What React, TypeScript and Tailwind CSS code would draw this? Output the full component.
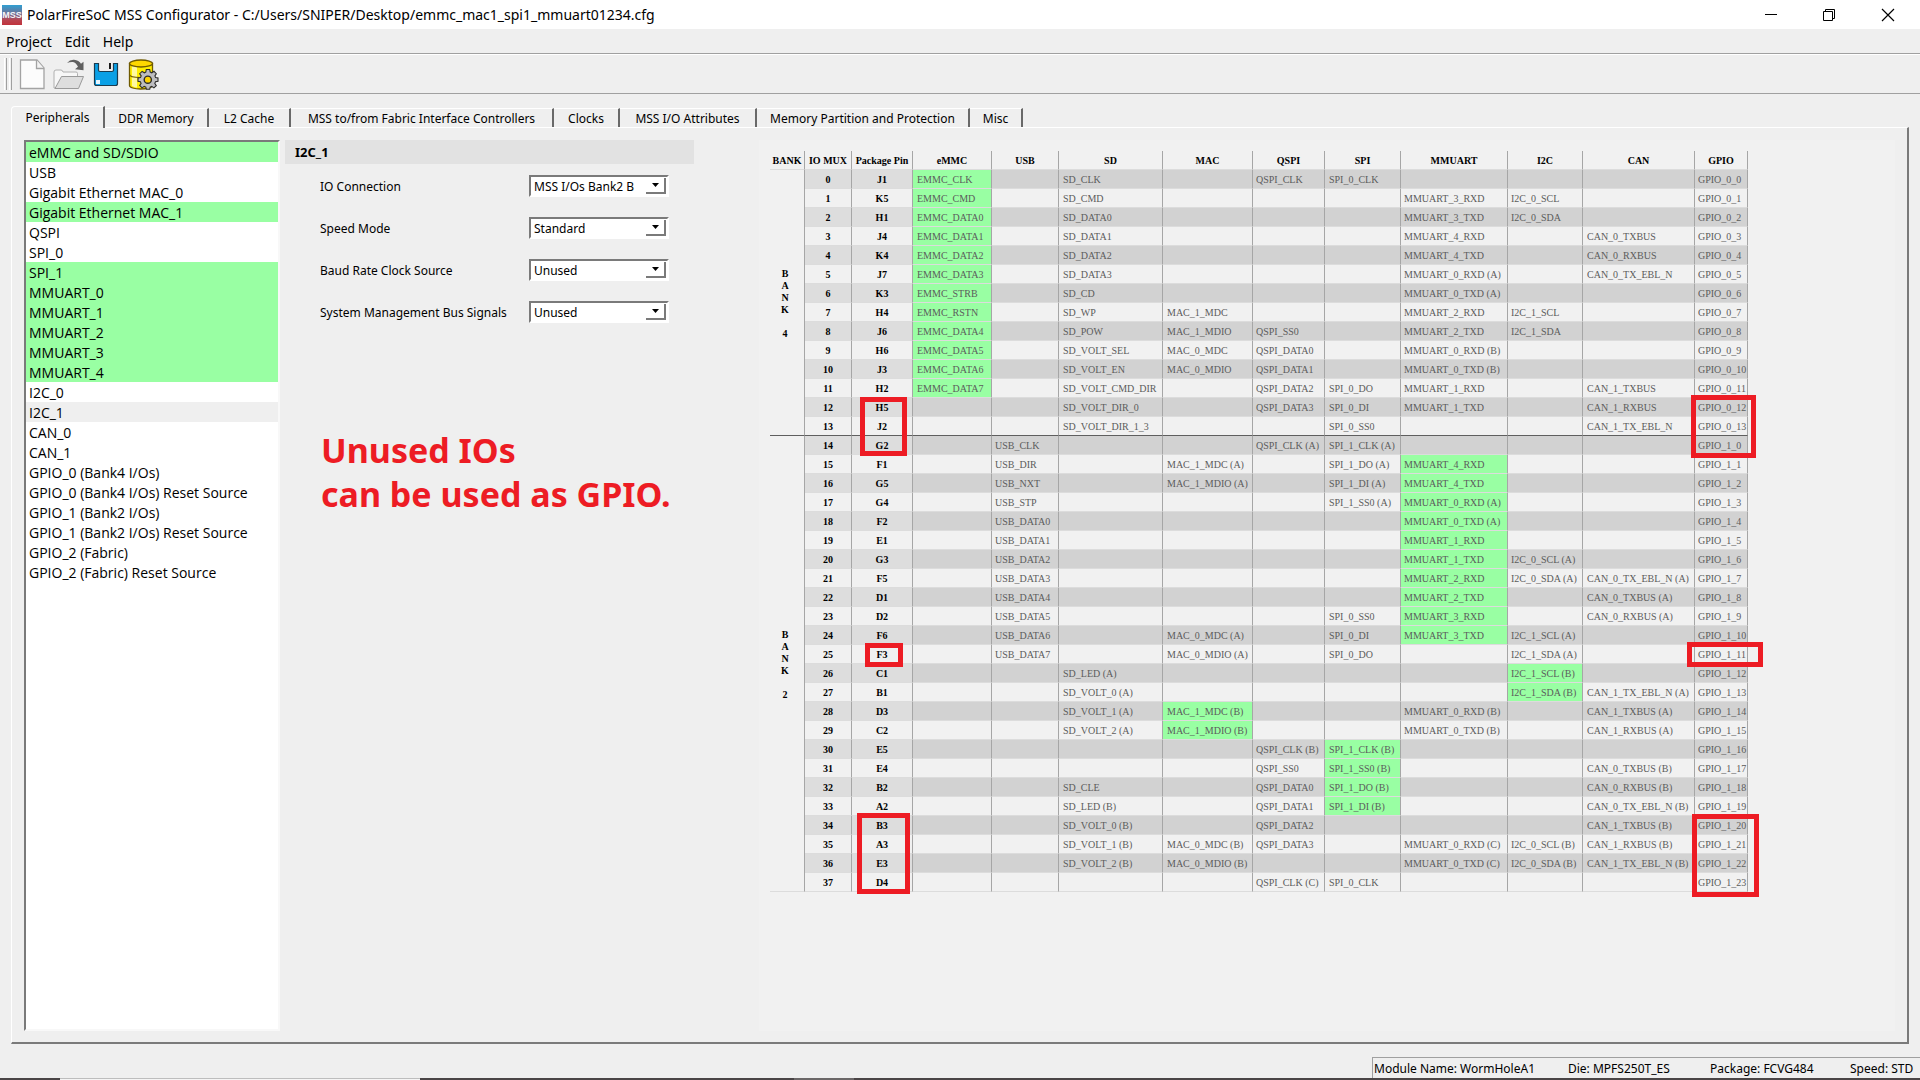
const SANS = "font-['Noto_Sans','Segoe_UI',sans-serif]";

const PERIPHERALS: { name: string; state?: 'used' | 'current' }[] = [
  { name: 'eMMC and SD/SDIO', state: 'used' },
  { name: 'USB' },
  { name: 'Gigabit Ethernet MAC_0' },
  { name: 'Gigabit Ethernet MAC_1', state: 'used' },
  { name: 'QSPI' },
  { name: 'SPI_0' },
  { name: 'SPI_1', state: 'used' },
  { name: 'MMUART_0', state: 'used' },
  { name: 'MMUART_1', state: 'used' },
  { name: 'MMUART_2', state: 'used' },
  { name: 'MMUART_3', state: 'used' },
  { name: 'MMUART_4', state: 'used' },
  { name: 'I2C_0' },
  { name: 'I2C_1', state: 'current' },
  { name: 'CAN_0' },
  { name: 'CAN_1' },
  { name: 'GPIO_0 (Bank4 I/Os)' },
  { name: 'GPIO_0 (Bank4 I/Os) Reset Source' },
  { name: 'GPIO_1 (Bank2 I/Os)' },
  { name: 'GPIO_1 (Bank2 I/Os) Reset Source' },
  { name: 'GPIO_2 (Fabric)' },
  { name: 'GPIO_2 (Fabric) Reset Source' },
];

const TABS = [
  { label: 'DDR Memory', width: 'w-[104px]' },
  { label: 'L2 Cache', width: 'w-[82px]' },
  { label: 'MSS to/from Fabric Interface Controllers', width: 'w-[263px]' },
  { label: 'Clocks', width: 'w-[66px]' },
  { label: 'MSS I/O Attributes', width: 'w-[137px]' },
  { label: 'Memory Partition and Protection', width: 'w-[213px]' },
  { label: 'Misc', width: 'w-[53px]' },
];

const FIELDS = [
  { id: 'io', label: 'IO Connection', value: 'MSS I/Os Bank2 B' },
  { id: 'speed', label: 'Speed Mode', value: 'Standard' },
  { id: 'baud', label: 'Baud Rate Clock Source', value: 'Unused' },
  { id: 'smbus', label: 'System Management Bus Signals', value: 'Unused' },
];

const COLUMNS = [
  { title: 'BANK', width: 'w-[35px]' },
  { title: 'IO MUX', width: 'w-[47px]' },
  { title: 'Package Pin', width: 'w-[61px]' },
  { title: 'eMMC', width: 'w-[79px]' },
  { title: 'USB', width: 'w-[67px]' },
  { title: 'SD', width: 'w-[104px]' },
  { title: 'MAC', width: 'w-[90px]' },
  { title: 'QSPI', width: 'w-[72px]' },
  { title: 'SPI', width: 'w-[76px]' },
  { title: 'MMUART', width: 'w-[107px]' },
  { title: 'I2C', width: 'w-[75px]' },
  { title: 'CAN', width: 'w-[112px]' },
  { title: 'GPIO', width: 'w-[53px]' },
];

// Left padding of each signal column, from eMMC to GPIO.
const SIGNAL_PAD = ['pl-1', 'pl-[3px]', 'pl-1', 'pl-1', 'pl-[3px]', 'pl-1', 'pl-[3px]', 'pl-[3px]', 'pl-1', 'pl-[3px]'];

// One line per IO: pin | eMMC | USB | SD | MAC | QSPI | SPI | MMUART | I2C | CAN | GPIO.
// A leading * marks a signal that is in use.
const PINOUT = `
J1|*EMMC_CLK||SD_CLK||QSPI_CLK|SPI_0_CLK||||GPIO_0_0
K5|*EMMC_CMD||SD_CMD||||MMUART_3_RXD|I2C_0_SCL||GPIO_0_1
H1|*EMMC_DATA0||SD_DATA0||||MMUART_3_TXD|I2C_0_SDA||GPIO_0_2
J4|*EMMC_DATA1||SD_DATA1||||MMUART_4_RXD||CAN_0_TXBUS|GPIO_0_3
K4|*EMMC_DATA2||SD_DATA2||||MMUART_4_TXD||CAN_0_RXBUS|GPIO_0_4
J7|*EMMC_DATA3||SD_DATA3||||MMUART_0_RXD (A)||CAN_0_TX_EBL_N|GPIO_0_5
K3|*EMMC_STRB||SD_CD||||MMUART_0_TXD (A)|||GPIO_0_6
H4|*EMMC_RSTN||SD_WP|MAC_1_MDC|||MMUART_2_RXD|I2C_1_SCL||GPIO_0_7
J6|*EMMC_DATA4||SD_POW|MAC_1_MDIO|QSPI_SS0||MMUART_2_TXD|I2C_1_SDA||GPIO_0_8
H6|*EMMC_DATA5||SD_VOLT_SEL|MAC_0_MDC|QSPI_DATA0||MMUART_0_RXD (B)|||GPIO_0_9
J3|*EMMC_DATA6||SD_VOLT_EN|MAC_0_MDIO|QSPI_DATA1||MMUART_0_TXD (B)|||GPIO_0_10
H2|*EMMC_DATA7||SD_VOLT_CMD_DIR||QSPI_DATA2|SPI_0_DO|MMUART_1_RXD||CAN_1_TXBUS|GPIO_0_11
H5|||SD_VOLT_DIR_0||QSPI_DATA3|SPI_0_DI|MMUART_1_TXD||CAN_1_RXBUS|GPIO_0_12
J2|||SD_VOLT_DIR_1_3|||SPI_0_SS0|||CAN_1_TX_EBL_N|GPIO_0_13
G2||USB_CLK|||QSPI_CLK (A)|SPI_1_CLK (A)||||GPIO_1_0
F1||USB_DIR||MAC_1_MDC (A)||SPI_1_DO (A)|*MMUART_4_RXD|||GPIO_1_1
G5||USB_NXT||MAC_1_MDIO (A)||SPI_1_DI (A)|*MMUART_4_TXD|||GPIO_1_2
G4||USB_STP||||SPI_1_SS0 (A)|*MMUART_0_RXD (A)|||GPIO_1_3
F2||USB_DATA0|||||*MMUART_0_TXD (A)|||GPIO_1_4
E1||USB_DATA1|||||*MMUART_1_RXD|||GPIO_1_5
G3||USB_DATA2|||||*MMUART_1_TXD|I2C_0_SCL (A)||GPIO_1_6
F5||USB_DATA3|||||*MMUART_2_RXD|I2C_0_SDA (A)|CAN_0_TX_EBL_N (A)|GPIO_1_7
D1||USB_DATA4|||||*MMUART_2_TXD||CAN_0_TXBUS (A)|GPIO_1_8
D2||USB_DATA5||||SPI_0_SS0|*MMUART_3_RXD||CAN_0_RXBUS (A)|GPIO_1_9
F6||USB_DATA6||MAC_0_MDC (A)||SPI_0_DI|*MMUART_3_TXD|I2C_1_SCL (A)||GPIO_1_10
F3||USB_DATA7||MAC_0_MDIO (A)||SPI_0_DO||I2C_1_SDA (A)||GPIO_1_11
C1|||SD_LED (A)|||||*I2C_1_SCL (B)||GPIO_1_12
B1|||SD_VOLT_0 (A)|||||*I2C_1_SDA (B)|CAN_1_TX_EBL_N (A)|GPIO_1_13
D3|||SD_VOLT_1 (A)|*MAC_1_MDC (B)|||MMUART_0_RXD (B)||CAN_1_TXBUS (A)|GPIO_1_14
C2|||SD_VOLT_2 (A)|*MAC_1_MDIO (B)|||MMUART_0_TXD (B)||CAN_1_RXBUS (A)|GPIO_1_15
E5|||||QSPI_CLK (B)|*SPI_1_CLK (B)||||GPIO_1_16
E4|||||QSPI_SS0|*SPI_1_SS0 (B)|||CAN_0_TXBUS (B)|GPIO_1_17
B2|||SD_CLE||QSPI_DATA0|*SPI_1_DO (B)|||CAN_0_RXBUS (B)|GPIO_1_18
A2|||SD_LED (B)||QSPI_DATA1|*SPI_1_DI (B)|||CAN_0_TX_EBL_N (B)|GPIO_1_19
B3|||SD_VOLT_0 (B)||QSPI_DATA2||||CAN_1_TXBUS (B)|GPIO_1_20
A3|||SD_VOLT_1 (B)|MAC_0_MDC (B)|QSPI_DATA3||MMUART_0_RXD (C)|I2C_0_SCL (B)|CAN_1_RXBUS (B)|GPIO_1_21
E3|||SD_VOLT_2 (B)|MAC_0_MDIO (B)|||MMUART_0_TXD (C)|I2C_0_SDA (B)|CAN_1_TX_EBL_N (B)|GPIO_1_22
D4|||||QSPI_CLK (C)|SPI_0_CLK||||GPIO_1_23`
  .trim()
  .split('\n')
  .map((line) => line.split('|'));

const LAST_BANK4_ROW = 13;

const MARKS = [
  'left-[90px] top-[246px] w-[47px] h-[59px]',
  'left-[921px] top-[244px] w-[65px] h-[63px]',
  'left-[95px] top-[492px] w-[38px] h-[24px]',
  'left-[917px] top-[491px] w-[76px] h-[25px]',
  'left-[87px] top-[662px] w-[53px] h-[81px]',
  'left-[922px] top-[663px] w-[67px] h-[83px]',
];

function TitleBar() {
  return (
    <header className="flex h-[29px] shrink-0 items-center bg-white">
      <svg className="ml-[2px]" width="20" height="20" viewBox="0 0 20 20" aria-hidden="true">
        <defs>
          <linearGradient id="mss" x1="0" y1="0" x2="0" y2="1">
            <stop offset="0" stopColor="#2f9fd2" />
            <stop offset="0.5" stopColor="#7a6a8c" />
            <stop offset="0.75" stopColor="#b94450" />
            <stop offset="1" stopColor="#c0333c" />
          </linearGradient>
        </defs>
        <rect width="20" height="20" fill="url(#mss)" />
        <text x="10" y="13" textAnchor="middle" fontSize="9" fontWeight="700" fill="#f4f4f8" fontFamily="Liberation Sans, sans-serif">MSS</text>
      </svg>
      <h1 className="ml-[5px] text-[14px] leading-5 whitespace-nowrap">
        PolarFireSoC MSS Configurator - C:/Users/SNIPER/Desktop/emmc_mac1_spi1_mmuart01234.cfg
      </h1>
      <div className="ml-auto flex h-full">
        <button type="button" aria-label="Minimize" className="flex w-[58px] items-center justify-center">
          <svg width="14" height="14" viewBox="0 0 14 14" stroke="#000" fill="none"><path d="M1 6.5h12" /></svg>
        </button>
        <button type="button" aria-label="Restore" className="flex w-[58px] items-center justify-center">
          <svg width="14" height="14" viewBox="0 0 14 14" stroke="#000" fill="none"><path d="M1.500 3.500h9v9h-9zM3.500 3.500v-2h9v9h-2" /></svg>
        </button>
        <button type="button" aria-label="Close" className="flex w-[62px] items-center justify-center pr-[2px]">
          <svg width="14" height="14" viewBox="0 0 14 14" stroke="#000" strokeWidth="1.2" fill="none"><path d="M1 1l12 12M13 1L1 13" /></svg>
        </button>
      </div>
    </header>
  );
}

function ToolBar() {
  return (
    <div className="flex h-[39px] shrink-0 items-center border-b border-[#a0a0a0] pl-1" role="toolbar">
      <span className="flex gap-[2px]">
        <span className="h-8 w-[3px] border-r border-l border-r-[#a0a0a0] border-l-white" />
        <span className="h-8 w-[3px] border-r border-l border-r-[#a0a0a0] border-l-white" />
      </span>
      <button type="button" aria-label="New" className="ml-[7px]">
        <svg width="27" height="31" viewBox="0 0 27 31">
          <path d="M1.500 1H18l7 8v20.500H1.500z" fill="#fcfcfc" stroke="#a3a3a3" strokeWidth="1.3" />
          <path d="M17.500 1v8.500H25" fill="#f3f3f3" stroke="#a3a3a3" strokeWidth="1.3" />
        </svg>
      </button>
      <button type="button" aria-label="Open" className="ml-[7px]">
        <svg width="32" height="31" viewBox="0 0 32 31">
          <path d="M1 29V13q0-2 2-2h5q1.500 0 2 2h13q1.500 0 1.500 1.500V18L21 29z" fill="#f7f7f7" stroke="#b0b0b0" />
          <path d="M2 29.500L8.500 17.500H30.500L25.500 29.500z" fill="#dedede" stroke="#9a9a9a" />
          <path d="M14 4Q17 .5 21 .8q5 .5 7 4l2.500-2v8.500l-8.500-1 3-2.500Q23 3.500 20 3q-3-.3-6 1z" fill="#606060" />
        </svg>
      </button>
      <button type="button" aria-label="Save" className="ml-[8px]">
        <svg width="26" height="27" viewBox="0 0 26 27">
          <path d="M1.500 2.500h4v6.500q0 1.500 1.500 1.500h12q1.500 0 1.500-1.500V2.500h4v20q0 2-2 2h-19q-2 0-2-2z" fill="#0aa0e6" stroke="#1b3c50" strokeWidth="1.200" />
          <path d="M17 2v6" stroke="#1a1a1a" strokeWidth="2" />
          <path d="M3 19h4v4h-4z" fill="#e8f6ff" />
        </svg>
      </button>
      <button type="button" aria-label="Generate" className="ml-[9px]">
        <svg width="31" height="31" viewBox="0 0 31 31">
          <path d="M1.500 4.500v22c0 2 5 3.500 11 3.500s12-1.500 12-3.500v-22z" fill="#ffee00" stroke="#6f5a00" strokeWidth="1.300" />
          <path d="M4 6v21q3 1.500 5 1.500V7z" fill="#fff9a0" />
          <path d="M1.500 15.500c0 2 5 3 11 3s12-1 12-3" fill="none" stroke="#6f5a00" strokeWidth="1.200" />
          <ellipse cx="13" cy="4.500" rx="11.500" ry="3.500" fill="#ffd800" stroke="#6f5a00" strokeWidth="1.300" />
          <path d="M17.800 13.100l.5-2.600h3.400l.5 2.600 1.600.7 2.200-1.500 2.300 2.400-1.400 2.200.7 1.600 2.400.5v3.300l-2.500.5-.7 1.600 1.500 2.200-2.400 2.300-2.200-1.500-1.500.7-.5 2.200h-3.300l-.6-2.200-1.600-.7-2.200 1.500-2.300-2.400 1.400-2.100-.7-1.600-2.400-.5V19l2.500-.5.7-1.600-1.500-2.200 2.400-2.300 2.200 1.400z" fill="#bdbdc0" stroke="#2c2c2c" strokeWidth="1.100" />
          <circle cx="19.800" cy="20.700" r="3.600" fill="#ffd400" stroke="#2c2c2c" strokeWidth="1.400" />
        </svg>
      </button>
    </div>
  );
}

function PinTable() {
  const line = 'border-r border-r-[#a6a6a6] border-b';
  return (
    <div className="relative w-max">
      <table className="table-fixed w-max border-separate border-spacing-0 font-['Liberation_Serif','Times_New_Roman',serif] text-[10px] leading-4">
        <thead>
          <tr>
            {COLUMNS.map((c) => (
              <th key={c.title} className={`${c.width} ${line} border-b-[#dcdcdc] p-0 pt-[2px] font-bold whitespace-nowrap`}>
                {c.title}
              </th>
            ))}
          </tr>
        </thead>
        <tbody>
          {PINOUT.map(([pin, ...signals], row) => {
            const bottom = row === LAST_BANK4_ROW ? 'border-b-[#5f5f5f]' : 'border-b-[#dcdcdc]';
            const even = row % 2 === 0;
            return (
              <tr key={row}>
                {(row === 0 || row === LAST_BANK4_ROW + 1) && (
                  <th
                    rowSpan={row === 0 ? 14 : 24}
                    className={`${line} ${row === 0 ? 'border-b-[#5f5f5f]' : 'border-b-[#dcdcdc]'} p-0 pt-[2px] pr-1 align-middle leading-3 font-bold whitespace-pre`}
                  >
                    {row === 0 ? 'B\nA\nN\nK\n\n4' : 'B\nA\nN\nK\n\n2'}
                  </th>
                )}
                <th className={`${line} ${bottom} ${even ? 'bg-[#dddddd]' : ''} p-0 pt-[2px] font-bold`}>{row}</th>
                <th className={`${line} ${bottom} ${even ? 'bg-[#dddddd]' : ''} p-0 pt-[2px] font-bold`}>{pin}</th>
                {signals.map((s, i) => (
                  <td
                    key={i}
                    className={`${line} ${bottom} ${s.startsWith('*') ? 'bg-[#99ffa3]' : even ? 'bg-[#d2d2d2]' : ''} p-0 pt-[2px] ${SIGNAL_PAD[i]} whitespace-nowrap text-[#5c5c5c]`}
                  >
                    {s.replace('*', '')}
                  </td>
                ))}
              </tr>
            );
          })}
        </tbody>
      </table>
      {MARKS.map((m) => (
        <span key={m} className={`absolute border-5 border-[#ed1c24] ${m}`} />
      ))}
    </div>
  );
}

export default function App() {
  return (
    <div className={`${SANS} flex h-screen min-h-[1000px] flex-col overflow-hidden bg-[#efefef] text-black`}>
      <TitleBar />
      <nav className="flex h-[25px] shrink-0 items-center gap-[13px] border-b border-[#a0a0a0] pt-[2px] pl-[6px] text-[14px] leading-5">
        <button type="button">Project</button>
        <button type="button">Edit</button>
        <button type="button">Help</button>
      </nav>
      <div className="h-px shrink-0 bg-white" />
      <ToolBar />

      <div className="mx-[11px] mt-3 flex h-[21px] shrink-0 items-end text-[12px] leading-4" role="tablist">
        <button type="button" role="tab" aria-selected="true" className="relative z-10 -mb-px flex h-[22px] w-[94px] items-center justify-center rounded-tl-sm border-t border-r-2 border-l border-t-white border-r-[#696969] border-l-white bg-[#efefef]">
          Peripherals
        </button>
        {TABS.map((t) => (
          <button key={t.label} type="button" role="tab" aria-selected="false" className={`${t.width} flex h-[19px] items-center justify-center border-t border-r-2 border-t-white border-r-[#696969] pt-[2px] whitespace-nowrap`}>
            {t.label}
          </button>
        ))}
      </div>

      <main className="mx-[11px] flex min-h-0 flex-1 border-t border-r-2 border-b-2 border-l border-t-white border-r-[#7a7a7a] border-b-[#7a7a7a] border-l-white px-3 pt-3 pb-[11px]">
        <ul className="w-[256px] shrink-0 border-2 border-t-[#7a7a7a] border-r-[#f8f8f8] border-b-[#f8f8f8] border-l-[#7a7a7a] bg-white font-['Open_Sans','Segoe_UI',sans-serif] text-[14px] leading-[18px]">
          {PERIPHERALS.map((p) => (
            <li key={p.name} className={`pt-[2px] pl-[3px] whitespace-nowrap ${p.state === 'used' ? 'bg-[#99ffa3]' : p.state === 'current' ? 'bg-[#efefef]' : ''}`}>
              {p.name}
            </li>
          ))}
        </ul>

        <section className="ml-[5px] w-[409px] shrink-0">
          <h2 className="bg-[#e2e2e2] pl-[10px] text-[13px] leading-6 font-bold">I2C_1</h2>
          <div className="mt-[11px] flex flex-col gap-5 pr-[25px] pl-[35px] text-[12px]">
            {FIELDS.map((f) => (
              <div key={f.id} className="flex h-[22px] items-center justify-between">
                <label htmlFor={f.id} className="pt-[2px]">{f.label}</label>
                <div className="relative">
                  <select id={f.id} defaultValue={f.value} className="h-[22px] w-[140px] appearance-none border-2 border-t-[#7a7a7a] border-r-white border-b-white border-l-[#7a7a7a] bg-white pt-px pl-[3px] text-[12px] leading-4">
                    <option>{f.value}</option>
                  </select>
                  <span className="pointer-events-none absolute top-[3px] right-[3px] flex h-4 w-5 items-center justify-center border-r-2 border-b-2 border-[#7a7a7a]">
                    <svg width="7" height="4" viewBox="0 0 7 4"><path d="M0 0h7L3.500 4z" /></svg>
                  </span>
                </div>
              </div>
            ))}
          </div>
          <p className="mt-[105px] pl-9 text-[34px] leading-11 font-bold whitespace-nowrap text-[#ed1c24]">
            Unused IOs
            <br />
            can be used as GPIO.
          </p>
        </section>

        <section className="ml-[65px] min-w-0 flex-1 bg-[#f1f1f1] pt-[11px] pl-[11px]">
          <PinTable />
        </section>
      </main>

      <footer className="mt-[13px] flex h-[21px] shrink-0 text-[12px] leading-[18px] whitespace-nowrap">
        <div className="ml-auto flex w-[548px] overflow-hidden border-t border-l border-[#a0a0a0] pt-[2px] pl-px">
          <span className="w-[194px] shrink-0">Module Name: WormHoleA1</span>
          <span className="w-[142px] shrink-0">Die: MPFS250T_ES</span>
          <span className="w-[140px] shrink-0">Package: FCVG484</span>
          <span>Speed: STD</span>
        </div>
      </footer>
      <div className="flex h-[2px] shrink-0 bg-[#4a4546]">
        <span className="ml-[60px] w-[360px] border-t border-[#bdbdbd] bg-[#f4f4f4]" />
        <span className="ml-[374px] w-[60px] bg-[#6b6768]" />
      </div>
    </div>
  );
}
